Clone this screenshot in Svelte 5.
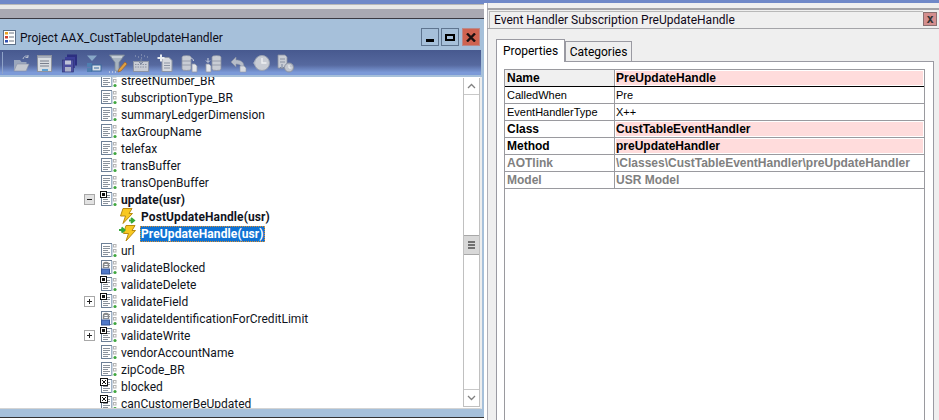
<script>
  const rows = [
    { t: 'streetNumber_BR', i: 'plain' },
    { t: 'subscriptionType_BR', i: 'plain' },
    { t: 'summaryLedgerDimension', i: 'plain' },
    { t: 'taxGroupName', i: 'plain' },
    { t: 'telefax', i: 'plain' },
    { t: 'transBuffer', i: 'plain' },
    { t: 'transOpenBuffer', i: 'plain' },
    { t: 'update(usr)', i: 'method', exp: 'minus', bold: true },
    { t: 'PostUpdateHandle(usr)', i: 'post', child: true, bold: true },
    { t: 'PreUpdateHandle(usr)', i: 'pre', child: true, bold: true, sel: true },
    { t: 'url', i: 'plain' },
    { t: 'validateBlocked', i: 'lock' },
    { t: 'validateDelete', i: 'method' },
    { t: 'validateField', i: 'method', exp: 'plus' },
    { t: 'validateIdentificationForCreditLimit', i: 'lock' },
    { t: 'validateWrite', i: 'method', exp: 'plus' },
    { t: 'vendorAccountName', i: 'plain' },
    { t: 'zipCode_BR', i: 'plain' },
    { t: 'blocked', i: 'box' },
    { t: 'canCustomerBeUpdated', i: 'box' }
  ];
  const props = [
    { k: 'Name', v: 'PreUpdateHandle', kind: 'req first' },
    { k: 'CalledWhen', v: 'Pre', kind: '' },
    { k: 'EventHandlerType', v: 'X++', kind: '' },
    { k: 'Class', v: 'CustTableEventHandler', kind: 'req' },
    { k: 'Method', v: 'preUpdateHandler', kind: 'req' },
    { k: 'AOTlink', v: '\\Classes\\CustTableEventHandler\\preUpdateHandler', kind: 'ro' },
    { k: 'Model', v: 'USR Model', kind: 'ro' }
  ];
</script>

{#snippet docBase()}
  <rect x="1.5" y="1.5" width="10" height="13" fill="#fff" stroke="#6c7f96" />
  <rect x="11" y="2" width="1.5" height="13" fill="#9fb2c8" />
  <path d="M3 4.5h7M3 6.5h7M3 8.5h5M3 10.5h7M3 12.5h5" stroke="#8a929c" stroke-width="1" />
  <rect x="13.5" y="2.5" width="2.5" height="2.5" fill="#fff" stroke="#b4b4b4" stroke-width="1" />
  <rect x="13.5" y="7.5" width="2.5" height="2.5" fill="#fff" stroke="#b4b4b4" stroke-width="1" />
  <circle cx="15" cy="13.5" r="1.6" fill="#3fa63f" />
{/snippet}

{#snippet bolt(dir)}
  {#if dir === 'post'}
    <path d="M4 0.500h9l-3 5h3.500l-9.500 10 2.500-7.500H1.500z" fill="#f8c820" stroke="#b88a10" stroke-width="1" stroke-linejoin="round" />
    <path d="M10 12.500h4M12 10l3 2.500-3 2.500" fill="none" stroke="#38a838" stroke-width="2" />
  {:else}
    <path d="M7 0.500h9l-3 5h3.500L7 16l2.500-7.500H4.500z" fill="#f8c820" stroke="#b88a10" stroke-width="1" stroke-linejoin="round" />
    <path d="M0 5h4M2.500 2.500l3 2.500-3 2.500" fill="none" stroke="#38a838" stroke-width="2" />
  {/if}
{/snippet}

{#snippet treeIcon(kind)}
  <svg class="ticon" width="17" height="17" viewBox="0 0 17 17" aria-hidden="true">
    {#if kind === 'post' || kind === 'pre'}
      {@render bolt(kind)}
    {:else}
      {@render docBase()}
      {#if kind === 'method'}
        <rect x="0.500" y="0.500" width="6" height="6" fill="#fff" stroke="#111" />
        <rect x="2" y="2" width="3" height="3" fill="#111" />
      {:else if kind === 'box'}
        <rect x="0.500" y="0.500" width="7" height="7" fill="#fff" stroke="#111" />
        <path d="M2 2l4 4M6 2l-4 4" stroke="#111" stroke-width="1" />
      {:else if kind === 'lock'}
        <path d="M3.500 9V6a2.500 2.500 0 0 1 5 0V9" fill="none" stroke="#8a8a8a" stroke-width="1.500" />
        <rect x="1.500" y="10" width="8" height="5" fill="#5078c8" stroke="#34569a" stroke-width="1" />
      {/if}
    {/if}
  </svg>
{/snippet}

<div class="app">
  <div class="left">
    <div class="strip-blue"></div>
    <div class="strip-light"></div>
    <div class="strip-gray"></div>
    <header class="head">
      <svg class="head-icon" width="17" height="17" viewBox="0 0 17 17" aria-hidden="true">
        <rect x="2.500" y="1.500" width="12" height="14" fill="#fff" stroke="#5c6f88" />
        <rect x="4" y="3" width="3" height="2.500" fill="#e8a020" />
        <rect x="4" y="7" width="3" height="2.500" fill="#d04030" />
        <rect x="4" y="11" width="3" height="2.500" fill="#3050b0" />
        <path d="M8 4h5M8 8h5M8 12h5" stroke="#6a7280" />
      </svg>
      <span class="head-title">Project AAX_CustTableUpdateHandler</span>
      <div class="winbtns">
        <button class="wb" aria-label="Minimize"><i class="bar-min"></i></button>
        <button class="wb" aria-label="Maximize"><i class="bar-max"></i></button>
        <button class="wb wb-close" aria-label="Close">
          <svg width="10" height="9" viewBox="0 0 10 9"><path d="M1 0.500l8 8M9 0.500l-8 8" stroke="#1a1010" stroke-width="2.400" /></svg>
        </button>
      </div>
    </header>
    <div class="toolbar">
      <i class="grip"></i>
      <svg class="tools" width="290" height="22" viewBox="0 0 290 22" aria-hidden="true">
        <g transform="translate(8 2)">
          <path d="M1 6h6l1.500 2h5v9H1z" fill="#9aa6bd" />
          <path d="M1 17l3-7h12l-3 7z" fill="#c4c8d0" stroke="#8a92a4" stroke-width="0.600" />
          <path d="M10 5c1-3 3-3.500 5-2.500M15 1v2.500h-2.500" fill="none" stroke="#b8c0d0" />
        </g>
        <g transform="translate(32 2)">
          <rect x="0.500" y="1.500" width="14" height="16" fill="#d8dce0" stroke="#8d93a0" />
          <rect x="1" y="2" width="13" height="2" fill="#a8aebc" />
          <path d="M3 7h9M3 9.500h9M3 12h9" stroke="#787e8c" />
          <rect x="5" y="15" width="6" height="2" fill="#60a0d0" />
        </g>
        <g transform="translate(57 2)">
          <rect x="5" y="0.500" width="10" height="11" fill="#2c2f80" />
          <rect x="3" y="3" width="10" height="11" fill="#3c3f98" />
          <rect x="0.500" y="6" width="11" height="12" fill="#4e509f" stroke="#2c2f70" stroke-width="0.600" />
          <rect x="3" y="6.500" width="6" height="4" fill="#c0c4d8" />
          <rect x="3" y="13" width="6" height="4.500" fill="#aeb2c8" />
        </g>
        <g transform="translate(81 3)">
          <path d="M1 0.500h10L6 6z" fill="#88a8c8" />
          <rect x="1" y="8" width="5" height="4" fill="#4f7fb0" />
          <rect x="1" y="13" width="5" height="4" fill="#4f7fb0" />
          <rect x="6" y="10" width="9" height="6" fill="#d8e0e8" stroke="#3a6a9c" stroke-width="1" />
          <path d="M8 13h5" stroke="#3a6a9c" />
        </g>
        <g transform="translate(104 2)">
          <path d="M0.500 1h15L10 8.500V17H6V8.500z" fill="#a8b4c0" stroke="#7e8a98" stroke-width="0.800" />
          <path d="M3 3h10" stroke="#e4e8ec" />
          <path d="M10 15l6-7 2 2-6 7-3 1z" fill="#e0a040" stroke="#9a5a24" stroke-width="0.600" />
          <path d="M0 18h1M3 18h1M6 18h1" stroke="#f0f0f0" />
        </g>
        <g transform="translate(128 3)">
          <path d="M2 1h1M5 2h1M8 0h1M11 1h1M14 2h1M8 3h1" stroke="#a4aec4" />
          <rect x="0.500" y="6.500" width="15" height="10" fill="#c8ccd4" stroke="#8c94a4" />
          <path d="M2 9.500h12M2 12h12" stroke="#8a92a4" stroke-dasharray="1.500 1" />
          <path d="M8 4v5M6 7l2 2 2-2" fill="none" stroke="#7d88a0" />
        </g>
        <g transform="translate(152 2)">
          <path d="M5 3.500h7l3 3v11H5z" fill="#d6d9de" stroke="#8d95a4" />
          <path d="M7 9h6M7 11.500h6M7 14h6" stroke="#8d95a4" />
          <path d="M4 0.500v7M0.500 4h7" stroke="#e8ecf0" stroke-width="2" />
        </g>
        <g transform="translate(176 3)">
          <path d="M1 2a4.500 1.500 0 0 1 9 0v12a4.500 1.500 0 0 1-9 0z" fill="#c8ccd4" stroke="#8a92a2" stroke-width="0.800" />
          <path d="M1 6h9M1 10h9" stroke="#8a92a2" stroke-width="0.800" />
          <path d="M11 9h3l2 2v6h-5z" fill="#e4e6ea" stroke="#9098a8" stroke-width="0.800" />
          <path d="M9 3c2 0 3.500 1 3.500 3" fill="none" stroke="#d0d6e0" />
        </g>
        <g transform="translate(200 3)">
          <path d="M7 2a4.500 1.500 0 0 1 9 0v12a4.500 1.500 0 0 1-9 0z" fill="#c8ccd4" stroke="#8a92a2" stroke-width="0.800" />
          <path d="M7 6h9M7 10h9" stroke="#8a92a2" stroke-width="0.800" />
          <path d="M1 9h3l2 2v6H1z" fill="#e4e6ea" stroke="#9098a8" stroke-width="0.800" />
          <path d="M3 3v4M1 5.500l2 2 2-2" fill="none" stroke="#d0d6e0" />
        </g>
        <g transform="translate(225 3)">
          <path d="M1 7l5-5v3c5 0 8 2 8 7h-3c0-2-2-3-5-3v3z" fill="#b6bcc8" stroke="#8a92a2" stroke-width="0.600" />
          <path d="M10 11h4l2 2v4h-6z" fill="#d8dbe0" stroke="#9098a8" stroke-width="0.600" />
        </g>
        <g transform="translate(248 3)">
          <circle cx="9" cy="8" r="7.500" fill="#c8ccd4" stroke="#9aa2b2" />
          <path d="M9 3v5h4.500" fill="none" stroke="#eef0f2" stroke-width="1.400" />
          <path d="M0 8l2-2v4z" fill="#b0b8c6" />
        </g>
        <g transform="translate(272 2)">
          <path d="M1 1h7l2 2v11H1z" fill="#c8ccd4" stroke="#8a92a2" stroke-width="0.800" />
          <path d="M3 5h5M3 8h5" stroke="#8a92a2" />
          <path d="M5 10v5M3 13l2 2 2-2" fill="none" stroke="#7d88a0" />
          <circle cx="12" cy="13.500" r="4.500" fill="#c2c6ce" stroke="#8a92a2" />
          <path d="M12 11v3h2.500" fill="none" stroke="#eef0f2" />
        </g>
      </svg>
    </div>
    <div class="tree-area">
      <div class="tree">
        <ul class="rows">
          {#each rows as r}
            <li class="row" class:child={r.child} class:bold={r.bold}>
              {#if r.exp}
                <span class="exp" class:minus={r.exp === 'minus'}><i></i>{#if r.exp === 'plus'}<b></b>{/if}</span>
              {/if}
              {@render treeIcon(r.i)}
              <span class="label" class:sel={r.sel}>{r.t}</span>
            </li>
          {/each}
        </ul>
      </div>
      <div class="sbar">
        <div class="sb-btn"><svg width="9" height="6" viewBox="0 0 9 6"><path d="M1 5l3.500-3.500L8 5" fill="none" stroke="#808080" stroke-width="1.300" /></svg></div>
        <div class="sb-track a"></div>
        <div class="sb-thumb"><i></i><i></i><i></i></div>
        <div class="sb-track"></div>
        <div class="sb-btn bottom"><svg width="9" height="6" viewBox="0 0 9 6"><path d="M1 1l3.500 3.500L8 1" fill="none" stroke="#808080" stroke-width="1.300" /></svg></div>
      </div>
    </div>
    <div class="foot"></div>
  </div>

  <div class="right">
    <div class="r-top"></div>
    <div class="r-title">
      <div class="r-caption">Event Handler Subscription PreUpdateHandle</div>
      <button class="r-close" aria-label="Close">x</button>
    </div>
    <div class="tabs">
      <div class="tab active">Properties</div>
      <div class="tab">Categories</div>
    </div>
    <div class="pane">
      <div class="grid">
        {#each props as p}
          <div class="prow {p.kind}">
            <div class="k">{p.k}</div>
            <div class="v"><span>{p.v}</span></div>
          </div>
        {/each}
      </div>
    </div>
  </div>
</div>

<style>
  :global(body) { margin: 0; background: #fff; }
  .app {
    width: 939px; height: 420px; overflow: hidden; display: flex;
    font-family: Roboto, "Noto Sans", sans-serif; color: #000;
  }
  .left { width: 484px; height: 418px; flex: none; display: flex; flex-direction: column; background: #a6c0da; }
  .strip-blue { height: 4px; background: #6f88c8; flex: none; }
  .strip-light { height: 5px; background: #e8e8e8; border-top: 1px solid #b8b8b8; box-sizing: border-box; flex: none; }
  .strip-gray { height: 10px; box-sizing: border-box; background: #a9a9b3; border-bottom: 1px solid #3a3a44; flex: none; }
  .head {
    height: 31px; background: #a6c0da; display: flex; align-items: center; padding: 6px 4px 0 1px;
    box-sizing: border-box; flex: none;
  }
  .head-icon { margin-right: 2px; }
  .head-title { font-size: 12px; color: #0c0c18; }
  .winbtns { margin-left: auto; display: flex; gap: 2px; margin-top: -1px; }
  .wb {
    width: 18px; height: 18px; padding: 0; border: 1px solid #5f7590; background: #a6c0da;
    display: flex; align-items: center; justify-content: center; box-sizing: border-box;
  }
  .wb-close { background: #cf6350; border-color: #b88; margin-left: 1px; }
  .bar-min { display: block; width: 8px; height: 3px; background: #000; margin-top: 6px; }
  .bar-max { display: block; width: 6px; height: 3px; border: 2px solid #000; }
  .toolbar {
    height: 27px; box-sizing: border-box; margin-right: 2px; display: flex; align-items: center; flex: none;
    background: linear-gradient(#47598f 0, #56699f 60%, #7c9ad8 90%, #7c9ad8 100%);
    border-bottom: 2px solid #a6c0da;
    border-right: 1px solid #a6c0da;
  }
  .grip { width: 1px; height: 22px; background: #8fa3c8; margin-left: 2px; flex: none; }
  .tools { margin-left: 2px; display: block; }
  .tree-area {
    height: 332px; flex: none; margin-right: 2px; display: flex; background: #fff; overflow: hidden;
    border-right: 2px solid #eeeeee; border-bottom: 1px solid #d4d4d4; box-sizing: border-box;
  }
  .tree { flex: 1; overflow: hidden; min-width: 0; }
  .rows { list-style: none; margin: -5px 0 0; padding: 0 0 0 100px; }
  .row {
    height: 17px; display: flex; align-items: center; position: relative; font-size: 12px; color: #10141c; white-space: nowrap;
  }
  .row.child { padding-left: 19px; }
  .row.bold { font-weight: 700; letter-spacing: 0.1px; }
  .row.child .ticon { margin-right: 4px; }
  .ticon { flex: none; margin-right: 3px; }
  .label { padding: 1px 1px 0; line-height: 15px; }
  .label.sel { background: #0f72d4; color: #fff; outline: 1px dotted #e0902c; outline-offset: -1px; }
  .exp {
    position: absolute; left: -16px; top: 3px; width: 9px; height: 9px; border: 1px solid #a8a8a8; background: #fff;
  }
  .exp.minus { background: #e2e2e2; }
  .exp i { position: absolute; left: 2px; top: 4px; width: 5px; height: 1px; background: #222; }
  .exp b { position: absolute; left: 4px; top: 2px; width: 1px; height: 5px; background: #222; }
  .sbar {
    width: 17px; flex: none; display: flex; flex-direction: column; box-sizing: border-box; margin: 1px 0;
    border: 1px solid #c0c0c0; border-top: 0;
  }
  .sb-btn { height: 17px; flex: none; display: flex; align-items: center; justify-content: center; border-bottom: 1px solid #c8c8c8; box-sizing: border-box; }
  .sb-btn.bottom { border-bottom: 0; border-top: 1px solid #c8c8c8; }
  .sb-track.a { height: 140px; flex: none; }
  .sb-track { flex: 1; }
  .sb-thumb {
    height: 20px; flex: none; background: #d8d8d8; border-top: 1px solid #a8a8a8; border-bottom: 1px solid #a8a8a8; box-sizing: border-box;
    display: flex; flex-direction: column; align-items: center; justify-content: center; gap: 1px;
  }
  .sb-thumb i { display: block; width: 7px; height: 2px; background: #707070; }
  .foot { background: #a6c0da; border-bottom: 1px solid #333; box-sizing: border-box; height: 9px; flex: none; }

  .right {
    flex: 1; background: #efefef; min-width: 0; border-left: 3px solid #fff; box-sizing: border-box;
    display: flex; flex-direction: column; box-shadow: inset 1px 0 0 #b0b0b8;
  }
  .r-top { height: 3px; background: #6f88c8; margin-left: -3px; flex: none; }
  .r-title {
    height: 21px; flex: none; margin-top: 5px; display: flex; box-sizing: border-box;
    border-top: 2px solid #a4a4a8; border-bottom: 1px solid #a4a4a8; padding: 1px 1px 0 2px;
    align-items: flex-start;
  }
  .r-caption {
    flex: 1; height: 17px; border: 1px solid #b8b8b8; border-right: 0; border-bottom: 0; font-size: 12px; line-height: 16px;
    padding-left: 4px; color: #100818; box-sizing: border-box;
  }
  .r-close {
    width: 14px; height: 14px; padding: 0; margin: 1px 1px 0 0; border: 1px solid #8a7070; background: #d38e8e; color: #333;
    font: bold 12px/10px "DejaVu Sans Mono", monospace;
  }
  .tabs { display: flex; height: 22px; margin: 10px 0 0 9px; align-items: flex-end; flex: none; position: relative; z-index: 1; font-size: 12px; }
  .tab {
    box-sizing: border-box; height: 20px; border: 1px solid #9a9aa2; border-bottom: 0; line-height: 21px; text-align: center; width: 67px; background: #efefef;
  }
  .tab.active { height: 23px; width: 69px; background: #fff; margin-bottom: -1px; line-height: 22px; }
  .pane {
    flex: 1; margin: 0 5px 0 9px; background: #fff; border: 1px solid #9a9aa2; border-bottom: 0; padding: 7px 8px 0 7px; display: flex; min-height: 0;
  }
  .grid {
    flex: 1; border-left: 1px solid #9a9a9f; border-right: 1px solid #9a9a9f; border-top: 1px solid #9a9a9f;
    font: 11px "Liberation Sans", Arial, sans-serif; min-height: 0;
  }
  .prow { display: flex; height: 17px; box-sizing: border-box; border-bottom: 1px solid #9a9a9f; }
  .prow.first { border-bottom-color: #000; }
  .k { width: 110px; box-sizing: border-box; flex: none; padding-left: 2px; border-right: 1px solid #9a9a9f; line-height: 16px; white-space: nowrap; }
  .v { flex: 1; padding-left: 1px; line-height: 16px; white-space: nowrap; }
  .prow.first .k { background: #f0f0f0; }
  .prow.req, .prow.ro { font-size: 12px; }
  .prow.req .k, .prow.req .v, .prow.ro .k, .prow.ro .v { font-weight: bold; }
  .prow.req .v { background: #ffdcdc; border: 1px solid #fff; line-height: 14px; padding-left: 0; box-sizing: border-box; }
  .prow.ro { color: #808080; }
</style>
